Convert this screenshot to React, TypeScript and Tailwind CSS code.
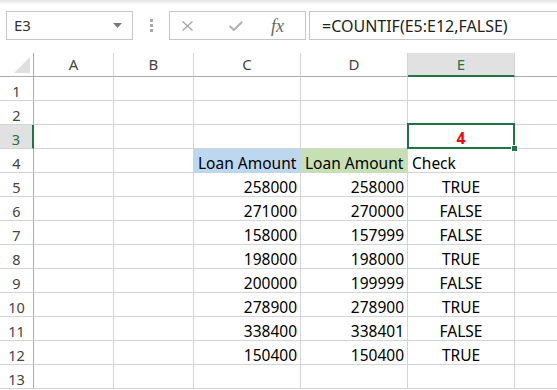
import React from "react";

// ── Data ─────────────────────────────────────────────────────────────────────
const cols = [
  { key: "A", w: "w-[80px]" },
  { key: "B", w: "w-[80px]" },
  { key: "C", w: "w-[107px]" },
  { key: "D", w: "w-[107px]" },
  { key: "E", w: "w-[107px]" },
];

const values: [string, string, string][] = [
  ["258000", "258000", "TRUE"],
  ["271000", "270000", "FALSE"],
  ["158000", "157999", "FALSE"],
  ["198000", "198000", "TRUE"],
  ["200000", "199999", "FALSE"],
  ["278900", "278900", "TRUE"],
  ["338400", "338401", "FALSE"],
  ["150400", "150400", "TRUE"],
];

const GRID = "border-r border-b border-[#d4d4d4]";
const TXT = "text-[15.5px] leading-[20px] pt-[4px] text-black";

// ── Toolbar ──────────────────────────────────────────────────────────────────
const Toolbar = () => (
  <div className="h-[53px] flex items-start pt-[11px] pl-[6px] bg-[linear-gradient(#e4e4e4,#ffffff_5px)]">
    {/* Name box */}
    <div className="w-[127px] h-[29px] border border-[#c6c6c6] bg-white flex items-center justify-between pl-[7px] pr-[10px]">
      <span className="text-[15px] text-[#333]">E3</span>
      <svg width="9" height="5" viewBox="0 0 9 5">
        <path d="M0 0 H9 L4.5 5 Z" fill="#7a7a7a" />
      </svg>
    </div>

    {/* Grip dots */}
    <div className="ml-[17px] mt-[8px] flex flex-col gap-[2px]">
      <span className="w-[3px] h-[3px] bg-[#a8a8a8]" />
      <span className="w-[3px] h-[3px] bg-[#a8a8a8]" />
      <span className="w-[3px] h-[3px] bg-[#a8a8a8]" />
    </div>

    {/* Cancel / enter / fx */}
    <div className="ml-[16px] w-[137px] h-[29px] border border-[#c6c6c6] bg-white flex items-center pl-[12px]">
      <svg width="11" height="10" viewBox="0 0 11 10" className="mt-[1px]">
        <path d="M0.5 0.5 L10.5 9.5 M10.5 0.5 L0.5 9.5" stroke="#a3a3a3" strokeWidth="1.3" />
      </svg>
      <svg width="14" height="10" viewBox="0 0 14 10" className="ml-[36px] mt-[1px]">
        <path d="M0.8 5 L4.8 9 L13.2 0.8" stroke="#b4b4b4" strokeWidth="2.2" fill="none" />
      </svg>
      <span className="ml-[28px] font-['Liberation_Serif',serif] italic text-[18px] leading-none text-[#666]">
        fx
      </span>
    </div>

    {/* Formula input */}
    <div className="ml-[3px] flex-1 h-[29px] border-y border-l border-[#c6c6c6] bg-white flex items-center pl-[12px]">
      <span className="text-[16px] text-[#222] whitespace-nowrap">=COUNTIF(E5:E12,FALSE)</span>
    </div>
  </div>
);

// ── Sheet ────────────────────────────────────────────────────────────────────
const HeaderRow = () => (
  <div className="flex h-[24px]">
    <div className="w-[34px] h-full border-r border-b border-[#ababab] flex items-end justify-end p-[3px]">
      <svg width="16" height="16" viewBox="0 0 16 16">
        <path d="M16 0 V16 H0 Z" fill="#dfdfdf" />
      </svg>
    </div>
    {cols.map((c) =>
      c.key === "E" ? (
        <div
          key={c.key}
          className={`${c.w} h-full bg-[#e1e1e1] border-r border-r-[#d4d4d4] border-b-2 border-b-[#217346] flex items-center justify-center text-[15px] text-[#217346]`}
        >
          {c.key}
        </div>
      ) : (
        <div
          key={c.key}
          className={`${c.w} h-full border-r border-r-[#d4d4d4] border-b border-b-[#ababab] flex items-center justify-center text-[15px] text-[#444]`}
        >
          {c.key}
        </div>
      )
    )}
    <div className="flex-1 h-full border-b border-[#ababab]" />
  </div>
);

const RowHead = ({ n }: { n: number }) =>
  n === 3 ? (
    <div className="w-[34px] h-full bg-[#e1e1e1] border-r-2 border-r-[#217346] border-b border-b-[#d4d4d4] flex justify-center text-[14.5px] leading-[20px] pt-[4px] text-[#217346]">
      {n}
    </div>
  ) : (
    <div className="w-[34px] h-full border-r border-r-[#ababab] border-b border-b-[#d4d4d4] flex justify-center text-[14.5px] leading-[20px] pt-[4px] text-[#444]">
      {n}
    </div>
  );

const Row = ({ n }: { n: number }) => {
  const v = n >= 5 && n <= 12 ? values[n - 5] : null;
  return (
    <div className="flex h-[24px]">
      <RowHead n={n} />
      <div className={`w-[80px] h-full ${GRID}`} />
      <div className={`w-[80px] h-full ${GRID}`} />

      {n === 4 ? (
        <>
          <div className={`w-[107px] h-full bg-[#bdd7ee] border-r border-b border-[#bdd7ee] pl-[4px] whitespace-nowrap ${TXT}`}>
            Loan Amount
          </div>
          <div className={`w-[107px] h-full bg-[#c6e0b4] border-r border-b border-[#c6e0b4] pl-[4px] whitespace-nowrap ${TXT}`}>
            Loan Amount
          </div>
          <div className={`w-[107px] h-full ${GRID} pl-[4px] ${TXT}`}>Check</div>
        </>
      ) : (
        <>
          <div className={`w-[107px] h-full ${GRID} text-right pr-[3px] ${TXT}`}>{v?.[0]}</div>
          <div className={`w-[107px] h-full ${GRID} text-right pr-[3px] ${TXT}`}>{v?.[1]}</div>
          {n === 3 ? (
            <div className={`relative w-[107px] h-full ${GRID} text-center font-bold text-[15.5px] leading-[20px] pt-[3px] text-[#ff0000]`}>
              4
              <div className="absolute -left-[1px] -top-[2px] w-[108px] h-[26px] border-2 border-[#217346]" />
              <div className="absolute -right-[4px] -bottom-[4px] w-[7px] h-[7px] bg-[#217346] border border-white" />
            </div>
          ) : (
            <div className={`w-[107px] h-full ${GRID} text-center ${TXT}`}>{v?.[2]}</div>
          )}
        </>
      )}
      <div className="flex-1 h-full border-b border-[#d4d4d4]" />
    </div>
  );
};

export default function App() {
  return (
    <div className="w-[557px] h-[390px] overflow-hidden bg-white font-['Noto_Sans',sans-serif]">
      <Toolbar />
      <HeaderRow />
      {Array.from({ length: 13 }, (_, i) => (
        <Row key={i} n={i + 1} />
      ))}
    </div>
  );
}
